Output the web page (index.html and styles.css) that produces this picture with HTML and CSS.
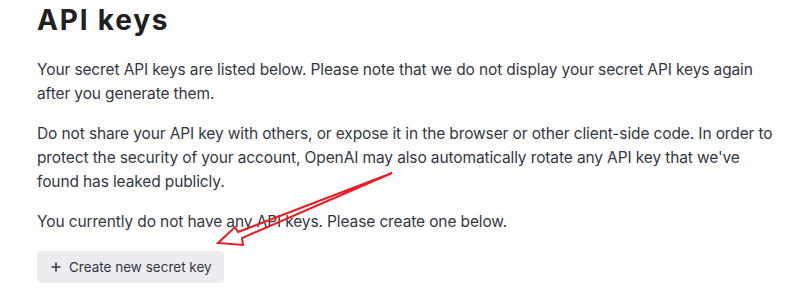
FILE: index.html
```html
<!DOCTYPE html>
<html>
<head>
<meta charset="utf-8">
<link rel="stylesheet" href="styles.css">
</head>
<body>
<main class="page">
  <h1 class="title">API keys</h1>
  <p class="text">Your secret API keys are listed below. Please note that we do not display your secret API keys again after you generate them.</p>
  <p class="text">Do not share your API key with others, or expose it in the browser or other client-side code. In order to protect the security of your account, OpenAI may also automatically rotate any API key that we've found has leaked publicly.</p>
  <p class="text">You currently do not have any API keys. Please create one below.</p>
  <button class="btn" type="button">
    <svg class="plus" width="12" height="12" viewBox="0 0 12 12"><path d="M6 1.5v9M1.5 6h9" stroke="#353740" stroke-width="1.6" fill="none"/></svg>
    <span>Create new secret key</span>
  </button>
  <svg class="arrow" width="787" height="301" viewBox="0 0 787 301">
    <polygon points="392,173 238,232 235,227 218,243 243,245 242,238" fill="none" stroke="#ec1c24" stroke-width="2" stroke-linejoin="miter"/>
  </svg>
</main>
</body>
</html>
```
FILE: styles.css
```css
html, body {
  margin: 0;
  padding: 0;
  background: #ffffff;
}
.page {
  position: relative;
  padding: 0 0 0 37px;
  width: 745px;
  font-family: "Inter", "Noto Sans", sans-serif;
  color: #353740;
}
.title {
  margin: 0;
  padding-top: 2px;
  font-size: 28px;
  line-height: 36px;
  font-weight: 700;
  color: #202123;
  letter-spacing: 1.8px;
}
.text {
  margin: 20px 0 0;
  font-size: 15.5px;
  line-height: 24px;
  letter-spacing: -0.12px;
}
.text + .text {
  margin-top: 16px;
}
.btn {
  margin-top: 17px;
  display: inline-flex;
  align-items: center;
  gap: 7px;
  height: 32px;
  padding: 0 12px 0 13px;
  border: none;
  border-radius: 4px;
  background: #ececf1;
  color: #353740;
  font-family: "Inter", "Noto Sans", sans-serif;
  font-size: 13.5px;
}
.plus {
  display: block;
}
.arrow {
  position: absolute;
  left: 0;
  top: 0;
  pointer-events: none;
}
```
